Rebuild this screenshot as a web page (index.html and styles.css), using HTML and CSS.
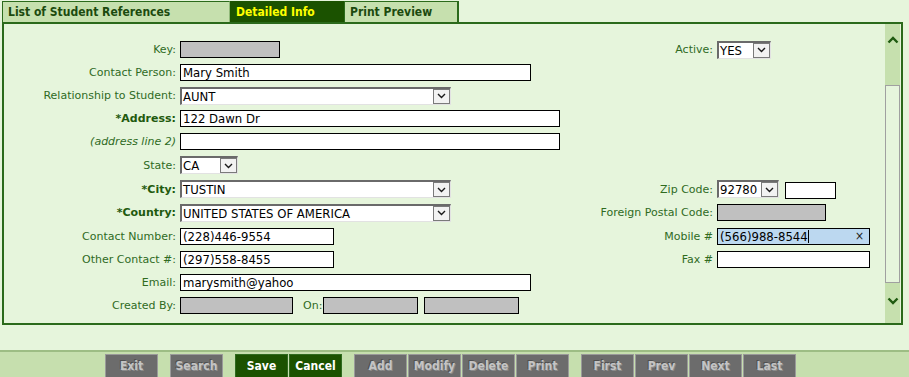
FILE: index.html
```html
<!DOCTYPE html>
<html lang="en">
  <head>
    <meta charset="UTF-8" />
    <title>Student References - Detailed Info</title>
    <link rel="stylesheet" href="styles.css">
  </head>

  <body>
    <nav class="tabs">
      <a href="#" class="tab tab-list">List of Student References</a>
      <a href="#" class="tab active">Detailed Info</a>
      <a href="#" class="tab tab-print">Print Preview</a>
    </nav>

    <div class="panel">
      <form class="form">
        <!-- row 1 -->
        <label class="lbl">Key:</label>
        <div class="cell"><input class="inp ro w-key" readonly /></div>
        <label class="lbl r">Active:</label>
        <div class="cell r">
          <div class="select w-active"><span class="val">YES</span><span class="arrow"><svg width="9" height="6" viewBox="0 0 9 6"><polyline points="1,1 4.5,4.5 8,1" /></svg></span></div>
        </div>

        <!-- row 2 -->
        <label class="lbl">Contact Person:</label>
        <div class="cell wide"><input class="inp w-name" value="Mary Smith" /></div>

        <!-- row 3 -->
        <label class="lbl">Relationship to Student:</label>
        <div class="cell wide">
          <div class="select w-long"><span class="val">AUNT</span><span class="arrow"><svg width="9" height="6" viewBox="0 0 9 6"><polyline points="1,1 4.5,4.5 8,1" /></svg></span></div>
        </div>

        <!-- row 4 -->
        <label class="lbl req">*Address:</label>
        <div class="cell wide"><input class="inp w-addr" value="122 Dawn Dr" /></div>

        <!-- row 5 -->
        <label class="lbl hint">(address line 2)</label>
        <div class="cell wide"><input class="inp w-addr" value="" /></div>

        <!-- row 6 -->
        <label class="lbl">State:</label>
        <div class="cell wide">
          <div class="select w-state"><span class="val">CA</span><span class="arrow"><svg width="9" height="6" viewBox="0 0 9 6"><polyline points="1,1 4.5,4.5 8,1" /></svg></span></div>
        </div>

        <!-- row 7 -->
        <label class="lbl req">*City:</label>
        <div class="cell">
          <div class="select w-long"><span class="val">TUSTIN</span><span class="arrow"><svg width="9" height="6" viewBox="0 0 9 6"><polyline points="1,1 4.5,4.5 8,1" /></svg></span></div>
        </div>
        <label class="lbl r">Zip Code:</label>
        <div class="cell r zip">
          <div class="select w-zip"><span class="val">92780</span><span class="arrow"><svg width="9" height="6" viewBox="0 0 9 6"><polyline points="1,1 4.5,4.5 8,1" /></svg></span></div>
          <input class="inp w-zip4" value="" />
        </div>

        <!-- row 8 -->
        <label class="lbl req">*Country:</label>
        <div class="cell">
          <div class="select w-long"><span class="val">UNITED STATES OF AMERICA</span><span class="arrow"><svg width="9" height="6" viewBox="0 0 9 6"><polyline points="1,1 4.5,4.5 8,1" /></svg></span></div>
        </div>
        <label class="lbl r">Foreign Postal Code:</label>
        <div class="cell r"><input class="inp ro w-postal" readonly /></div>

        <!-- row 9 -->
        <label class="lbl">Contact Number:</label>
        <div class="cell"><input class="inp w-phone" value="(228)446-9554" /></div>
        <label class="lbl r">Mobile #</label>
        <div class="cell r">
          <div class="inp focus w-mobile"><span>(566)988-8544</span><span class="caret"></span><span class="clear">&times;</span></div>
        </div>

        <!-- row 10 -->
        <label class="lbl">Other Contact #:</label>
        <div class="cell"><input class="inp w-phone" value="(297)558-8455" /></div>
        <label class="lbl r">Fax #</label>
        <div class="cell r"><input class="inp w-mobile" value="" /></div>

        <!-- row 11 -->
        <label class="lbl">Email:</label>
        <div class="cell wide"><input class="inp w-name" value="marysmith@yahoo" /></div>

        <!-- row 12 -->
        <label class="lbl">Created By:</label>
        <div class="cell wide created">
          <input class="inp ro w-by" readonly />
          <span class="on">On:</span>
          <input class="inp ro w-on" readonly />
          <input class="inp ro w-on last" readonly />
        </div>
      </form>

      <div class="scrollbar">
        <div class="sb-btn sb-up"><svg width="12" height="8" viewBox="0 0 12 8"><polyline points="1.5,6.5 6,2 10.5,6.5" /></svg></div>
        <div class="sb-thumb"></div>
        <div class="sb-btn sb-down"><svg width="12" height="8" viewBox="0 0 12 8"><polyline points="1.5,1.5 6,6 10.5,1.5" /></svg></div>
      </div>
    </div>

    <div class="toolbar">
      <div class="group">
        <button class="btn off">Exit</button>
      </div>
      <div class="group">
        <button class="btn off">Search</button>
      </div>
      <div class="group">
        <button class="btn on">Save</button>
        <button class="btn on">Cancel</button>
      </div>
      <div class="group">
        <button class="btn off">Add</button>
        <button class="btn off">Modify</button>
        <button class="btn off">Delete</button>
        <button class="btn off">Print</button>
      </div>
      <div class="group">
        <button class="btn off">First</button>
        <button class="btn off">Prev</button>
        <button class="btn off">Next</button>
        <button class="btn off">Last</button>
      </div>
    </div>
  </body>
</html>
```

FILE: styles.css
```css
body {
  margin: 0;
  background: #e6f5dc;
  font-family: "DejaVu Sans", Verdana, sans-serif;
  font-size: 11px;
  color: #2f6b1f;
}

/* tabs */
.tabs {
  display: flex;
  margin: 1px 0 0 2px;
  height: 21px;
}

.tab {
  display: block;
  box-sizing: border-box;
  height: 21px;
  padding: 3px 0 0 5px;
  background: #c6e0ae;
  border: 1px solid #2b6a1b;
  border-bottom: none;
  border-right-color: #8fb878;
  color: #1c4a0e;
  font-size: 12px;
  font-stretch: condensed;
  font-weight: bold;
  text-decoration: none;
}

.tab-list {
  width: 228px;
}

.tab.active {
  width: 114px;
  background: #1b5200;
  color: #ffff00;
  border-color: #1b5200;
}

.tab-print {
  width: 115px;
  border-right: 2px solid #2b6a1b;
}

/* panel */
.panel {
  display: flex;
  margin-left: 2px;
  width: 901px;
  height: 303px;
  box-sizing: border-box;
  border: 2px solid #2b6a1b;
}

.form {
  flex: 1;
  display: grid;
  grid-template-columns: 172px 400px 129px 160px;
  grid-template-rows: 23px 23px 23px 23px 23px 24px 24px 23px 24px 23px 23px 23px;
  grid-auto-flow: row;
  column-gap: 4px;
  align-content: start;
  padding-top: 14px;
  margin: 0;
}

.lbl {
  grid-column: 1;
  align-self: center;
  text-align: right;
  white-space: nowrap;
}

.cell {
  grid-column: 2;
  align-self: center;
  display: flex;
  align-items: center;
}

.cell.wide {
  grid-column: 2 / 5;
}

.lbl.r {
  grid-column: 3;
}

.cell.r {
  grid-column: 4;
}

.lbl.req {
  font-weight: bold;
  color: #1f5a0e;
}

.lbl.hint {
  font-style: italic;
}

.inp {
  box-sizing: border-box;
  height: 17px;
  margin: 0;
  padding: 0 2px;
  border: 1px solid #000;
  background: #fff;
  font-family: "DejaVu Sans", Verdana, sans-serif;
  font-stretch: condensed;
  font-size: 13px;
  color: #000;
  outline: none;
}

.inp.ro {
  background: #c0c0c0;
}

.w-key { width: 100px; }
.w-name { width: 351px; }
.w-addr { width: 380px; }
.w-phone { width: 154px; }
.w-by { width: 113px; }
.w-on { width: 95px; }
.w-postal { width: 109px; }
.w-mobile { width: 153px; }
.w-zip4 { width: 51px; margin-left: 6px; margin-top: 2px; }

.created .on {
  margin: 0 1px 0 10px;
}

.created .last {
  margin-left: 6px;
}

/* fake dropdowns */
.select {
  display: flex;
  box-sizing: border-box;
  height: 18px;
  border: 2px solid;
  border-color: #6a6a6a #e2e2e2 #e2e2e2 #6a6a6a;
  border-right-width: 1px;
  border-bottom-width: 1px;
  background: #fff;
  color: #000;
  font-size: 13px;
  font-stretch: condensed;
}

.select .val {
  flex: 1;
  padding-left: 1px;
  line-height: 15px;
  white-space: nowrap;
  overflow: hidden;
}

.select .arrow {
  width: 17px;
  height: 15px;
  box-sizing: border-box;
  border: 1px solid #7a7a7a;
  background: #f2f2f2;
  display: flex;
  align-items: center;
  justify-content: center;
}

.select .arrow polyline {
  fill: none;
  stroke: #1a1a1a;
  stroke-width: 1.4;
}

.w-long { width: 271px; }
.w-state { width: 58px; }
.w-active { width: 54px; }
.w-zip { width: 62px; }

/* focused mobile field */
.inp.focus {
  display: flex;
  align-items: center;
  background: #bcd8f0;
  line-height: 15px;
}

.caret {
  width: 1px;
  height: 13px;
  background: #000;
}

.clear {
  margin-left: auto;
  margin-right: 3px;
  font-size: 12px;
  color: #222;
}

/* scrollbar */
.scrollbar {
  width: 15px;
  margin-right: 1px;
  display: flex;
  flex-direction: column;
  background: #c6e0ae;
}

.sb-btn {
  display: flex;
  justify-content: center;
}

.sb-up {
  height: 61px;
  padding-top: 12px;
  box-sizing: border-box;
}

.sb-down {
  flex: 1;
  padding-top: 14px;
}

.sb-btn polyline {
  fill: none;
  stroke: #1f5a10;
  stroke-width: 2.4;
}

.sb-thumb {
  height: 198px;
  box-sizing: border-box;
  border: 1px solid #a0a0a0;
  background: #e6f5dc;
}

/* bottom toolbar */
.toolbar {
  display: flex;
  gap: 12px;
  margin-top: 25px;
  padding: 2px 0 0 105px;
  height: 26px;
  background: #c6dfae;
  border-top: 2px solid #9dbd84;
}

.group {
  display: flex;
  gap: 1px;
}

.btn {
  width: 53px;
  height: 24px;
  border: 1px solid #9a9a9a;
  font-family: "DejaVu Sans", Verdana, sans-serif;
  font-stretch: condensed;
  font-size: 12px;
  font-weight: bold;
  padding: 0;
  cursor: pointer;
}

.btn.off {
  background: #6c6c6c;
  color: #c4c4c4;
  text-shadow: 1px 1px 0 #8a8a8a, -1px -1px 0 #505050;
}

.btn.on {
  background: #1b5200;
  border-color: #2f6b1f;
  color: #fff;
}
```
